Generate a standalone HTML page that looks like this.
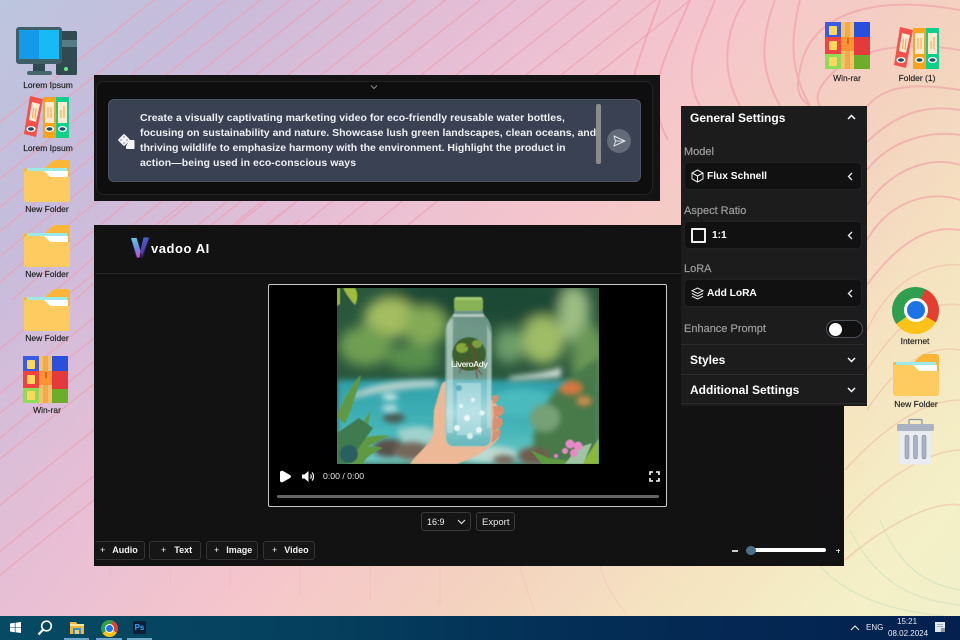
<!DOCTYPE html>
<html><head><meta charset="utf-8"><style>
*{box-sizing:border-box}
html,body{margin:0;padding:0}
body{width:960px;height:640px;overflow:hidden;position:relative;font-family:"Liberation Sans",sans-serif;background:linear-gradient(130deg,#bcc6de 0%,#c6bcdc 14%,#e6bed5 33%,#f5c5cc 49%,#f4d2bf 65%,#f5e3c0 78%,#f4efc6 90%,#f1f1cb 100%)}
.a{position:absolute}
.t{position:absolute;white-space:nowrap;line-height:1}
.l{position:absolute;white-space:nowrap;line-height:1;font-size:8.5px;color:#1c1c1c;transform:translateX(-50%);-webkit-text-stroke:.15px #1c1c1c}
svg.i{position:absolute;overflow:visible}
.btn{position:absolute;top:541px;height:19px;background:#161616;border:1px solid #333;border-radius:3px;color:#f2f2f2;font-size:9px;font-weight:bold;line-height:17px;white-space:nowrap}
.sel{position:absolute;left:684px;width:178px;height:28px;background:#111;border:1px solid #222;border-radius:5px}
.sh{position:absolute;left:690px;color:#fff;font-size:12px;font-weight:bold;line-height:1;white-space:nowrap}
.sl{position:absolute;left:684px;color:#9c9c9c;font-size:11px;line-height:1;white-space:nowrap;-webkit-text-stroke:.2px #9c9c9c}
.sv{position:absolute;color:#fff;font-size:10.2px;font-weight:bold;line-height:1;white-space:nowrap}
.p{position:absolute;left:140px;color:#eef0f4;font-size:10.5px;font-weight:bold;line-height:1;white-space:nowrap;letter-spacing:.05px}
</style></head><body>

<svg class="a" style="left:0;top:0" width="960" height="640" viewBox="0 0 960 640" fill="none">
<defs>
<path id="d" d="M-80 300C20 210 180 90 340 -40" />
</defs>
<g stroke="#ee9fb0" stroke-width="1.600" opacity=".6">
<use href="#d"/><use href="#d" x="-130" y="-5"/><use href="#d" x="-100"/><use href="#d" x="-65"/><use href="#d" x="-30"/><use href="#d" x="30"/><use href="#d" x="60"/><use href="#d" x="92"/><use href="#d" x="125"/><use href="#d" x="155"/><use href="#d" x="190"/><use href="#d" x="225"/><use href="#d" x="260"/><use href="#d" x="295"/><use href="#d" x="330"/><use href="#d" x="365"/><use href="#d" x="400"/>
<use href="#d" x="-40" y="150"/><use href="#d" x="-10" y="170"/><use href="#d" x="20" y="190"/><use href="#d" x="-60" y="230"/><use href="#d" x="-40" y="260"/><use href="#d" x="-20" y="290"/><use href="#d" x="0" y="320"/><use href="#d" x="-20" y="360"/>
</g>
<g stroke="#ee9aa5" stroke-width="2" opacity=".55">
<path d="M660 0C640 60 600 130 660 200"/><path d="M690 0C670 50 640 90 668 140"/><path d="M715 0C700 40 680 70 700 106"/><path d="M745 0C725 30 720 70 740 106"/><path d="M775 0C760 40 760 70 780 106"/><path d="M800 0C790 40 790 70 810 106"/>
<path d="M960 10C880 -5 810 10 800 70C795 90 800 100 810 106"/><path d="M960 50C900 40 850 50 826 80C816 92 816 100 820 106"/><path d="M960 90C900 80 880 92 867 106"/><path d="M867 142C900 110 930 105 960 110"/><path d="M867 170C890 140 930 130 960 135"/><path d="M867 205C890 170 930 155 960 165"/><path d="M867 240C890 200 930 190 960 200"/><path d="M867 285C900 240 930 225 960 230"/>
</g>
<g stroke="#eeb9a0" stroke-width="1.600" opacity=".5">
<path d="M867 330C890 280 930 262 960 265"/><path d="M867 370C900 320 930 300 960 305"/><path d="M867 410C900 360 930 345 960 350"/><path d="M845 470C890 420 930 400 960 400"/><path d="M845 520C880 480 930 450 960 450"/><path d="M845 560C880 530 930 500 960 505"/>
</g>
<g stroke="#cfe3c0" stroke-width="1.500" opacity=".6">
<path d="M880 520C900 570 930 585 960 590"/><path d="M850 530C880 590 920 600 960 605"/><path d="M820 566C850 600 900 612 945 616"/>
</g>
<g stroke="#f2b6b4" stroke-width="1.200" opacity=".35">
<path d="M110 566V580"/><path d="M170 566V585"/><path d="M230 566V590"/><path d="M300 566V595"/><path d="M370 566V600"/><path d="M440 566V605"/><path d="M520 566C525 585 530 600 535 612"/><path d="M600 566C605 585 615 600 625 612"/>
</g>
</svg>

<!-- icon defs -->
<svg width="0" height="0" style="position:absolute">
<defs>
<symbol id="folder" viewBox="0 0 46 42">
<path d="M22 7L30 0H43C45 0 46 1 46 3V20H22Z" fill="#fbb637"/>
<rect x="0" y="8" width="46" height="12" rx="2" fill="#fbb637"/>
<rect x="3" y="8" width="40" height="4" fill="#9ce9ea"/>
<path d="M20 11H44V17H26Z" fill="#fff"/>
<path d="M2 11H20L26 17H46V39C46 41 45 42 43 42H3C1 42 0 41 0 39V13C0 12 1 11 2 11Z" fill="#fdcb60"/>
</symbol>
<symbol id="books" viewBox="0 0 46 42">
<path d="M6 0L19 3L12 41L0 38Z" fill="#f3524c"/>
<path d="M8 6L16 8L12 26L5 24Z" fill="#fde9d2"/>
<path d="M9.500 12L8.500 22M12 12L11 23" stroke="#f7a13a" stroke-width="1"/>
<ellipse cx="7" cy="33" rx="4.500" ry="3" fill="#fff"/><ellipse cx="7" cy="33" rx="3" ry="1.800" fill="#1f4f5f"/>
<rect x="19" y="1" width="13" height="41" fill="#fca41d"/>
<rect x="21" y="6" width="9" height="21" fill="#fde9d2"/>
<path d="M24 11V22M27 11V22" stroke="#f7a13a" stroke-width="1"/>
<ellipse cx="25.500" cy="33" rx="4.500" ry="3" fill="#fff"/><ellipse cx="25.500" cy="33" rx="3" ry="1.800" fill="#1f4f5f"/>
<rect x="32" y="1" width="13" height="41" fill="#0fd08b"/>
<rect x="34" y="6" width="9" height="21" fill="#fde9d2"/>
<path d="M37 14V22M40 10V22" stroke="#f7a13a" stroke-width="1"/>
<ellipse cx="38.500" cy="33" rx="4.500" ry="3" fill="#fff"/><ellipse cx="38.500" cy="33" rx="3" ry="1.800" fill="#1f4f5f"/>
</symbol>
<symbol id="rar" viewBox="0 0 45 47">
<rect x="0" y="0" width="16" height="16" fill="#3a5ce0"/><rect x="0" y="15" width="16" height="17" fill="#f0433f"/><rect x="0" y="32" width="16" height="15" fill="#8fdc58"/>
<rect x="16" y="0" width="13" height="47" fill="#fbbf66"/><rect x="20" y="0" width="5" height="47" fill="#f0a94d"/>
<rect x="16" y="15" width="13" height="14" fill="#fd9433"/>
<rect x="22" y="16" width="2" height="6" fill="#e8631a"/>
<rect x="29" y="0" width="16" height="15" fill="#2a4fdc"/><rect x="29" y="15" width="16" height="18" fill="#e33b3b"/><rect x="29" y="33" width="16" height="14" fill="#6cae2c"/>
<rect x="4" y="4" width="8" height="9" rx="1" fill="#fbd85c"/><rect x="4" y="19" width="8" height="9" rx="1" fill="#fbd85c"/><rect x="4" y="35" width="8" height="9" rx="1" fill="#fbd85c"/>
</symbol>
</defs>
</svg>

<!-- desktop icons left -->
<svg class="i" style="left:16px;top:27px" width="61" height="48" viewBox="0 0 61 48">
<rect x="40" y="4" width="21" height="44" rx="1.500" fill="#2f4a50"/>
<rect x="40" y="13" width="21" height="7" fill="#547d86"/>
<circle cx="50" cy="42" r="2" fill="#6ee87f"/>
<rect x="0" y="0" width="46" height="37" rx="3" fill="#3f5f66"/>
<rect x="3" y="3" width="20" height="29" fill="#149ae8"/>
<rect x="23" y="3" width="20" height="29" fill="#18baf5"/>
<rect x="17" y="37" width="12" height="7" fill="#2f4a50"/>
<rect x="11" y="44" width="25" height="4" rx="2" fill="#47686f"/>
</svg>
<div class="l" style="left:48px;top:81px">Lorem Ipsum</div>
<svg class="i" style="left:24px;top:96px" width="46" height="42"><use href="#books"/></svg>
<div class="l" style="left:48px;top:144px">Lorem Ipsum</div>
<svg class="i" style="left:24px;top:160px" width="46" height="42"><use href="#folder"/></svg>
<div class="l" style="left:47px;top:205px">New Folder</div>
<svg class="i" style="left:24px;top:225px" width="46" height="42"><use href="#folder"/></svg>
<div class="l" style="left:47px;top:270px">New Folder</div>
<svg class="i" style="left:24px;top:289px" width="46" height="42"><use href="#folder"/></svg>
<div class="l" style="left:47px;top:334px">New Folder</div>
<svg class="i" style="left:23px;top:356px" width="45" height="47"><use href="#rar"/></svg>
<div class="l" style="left:47px;top:406px">Win-rar</div>

<!-- desktop icons right -->
<svg class="i" style="left:825px;top:22px" width="45" height="47"><use href="#rar"/></svg>
<div class="l" style="left:847px;top:74px">Win-rar</div>
<svg class="i" style="left:894px;top:27px" width="46" height="42"><use href="#books"/></svg>
<div class="l" style="left:917px;top:74px">Folder (1)</div>
<div class="a" style="left:892px;top:287px;width:47px;height:47px;border-radius:50%;background:conic-gradient(from 25deg,#e43e2f 0 95deg,#fbc21a 95deg 210deg,#2f9e4e 210deg 360deg)"></div>
<div class="a" style="left:904px;top:298px;width:24px;height:24px;border-radius:50%;background:#1c73e6;border:3px solid #fff"></div>
<div class="l" style="left:915px;top:337px">Internet</div>
<svg class="i" style="left:893px;top:354px" width="46" height="42"><use href="#folder"/></svg>
<div class="l" style="left:916px;top:400px">New Folder</div>
<svg class="i" style="left:897px;top:419px" width="37" height="46" viewBox="0 0 37 46">
<path d="M12 5V1.500C12 .8 12.500 .5 13 .5H24C24.500 .5 25 .8 25 1.500V5" fill="none" stroke="#8b96a5" stroke-width="1.300"/>
<rect x="3" y="11" width="31" height="34.500" rx="1.500" fill="#e9ecf1"/>
<rect x="0" y="5" width="37" height="7" rx="1.500" fill="#a9b3c1"/>
<rect x="8" y="16" width="4" height="24" rx="2" fill="#a9b3c1" stroke="#7f8ba0" stroke-width=".5"/>
<rect x="16.500" y="16" width="4" height="24" rx="2" fill="#a9b3c1" stroke="#7f8ba0" stroke-width=".5"/>
<rect x="25" y="16" width="4" height="24" rx="2" fill="#a9b3c1" stroke="#7f8ba0" stroke-width=".5"/>
</svg>

<!-- prompt panel -->
<div class="a" style="left:94px;top:75px;width:566px;height:126px;background:#141414"></div>
<div class="a" style="left:96px;top:81px;width:557px;height:114px;background:#0e0e0e;border:1px solid #242424;border-radius:8px"></div>
<svg class="i" style="left:370px;top:84px" width="8" height="6" viewBox="0 0 8 6"><path d="M1 1.500L4 4.500L7 1.500" fill="none" stroke="#8a8a8a" stroke-width="1"/></svg>
<div class="a" style="left:108px;top:99px;width:533px;height:83px;background:#3a4152;border:1px solid #4d5464;border-radius:6px"></div>
<div class="p" style="top:113px">Create a visually captivating marketing video for eco-friendly reusable water bottles,</div>
<div class="p" style="top:128px;letter-spacing:.005px">focusing on sustainability and nature. Showcase lush green landscapes, clean oceans, and</div>
<div class="p" style="top:143px;letter-spacing:-.01px">thriving wildlife to emphasize harmony with the environment. Highlight the product in</div>
<div class="p" style="top:158px">action—being used in eco-conscious ways</div>
<svg class="i" style="left:117px;top:133px" width="18" height="17" viewBox="0 0 18 17">
<rect x="2.500" y="2.500" width="9" height="9" rx="1.500" fill="#f4f4f6" transform="rotate(45 7 7)"/>
<path d="M12.500 7H16.500C17.200 7 17.500 7.500 17.500 8V15C17.500 15.800 17 16 16.500 16H10C9.300 16 9 15.500 9 15V13Z" fill="#f4f4f6"/>
<circle cx="7" cy="4" r=".6" fill="#3a4152"/><circle cx="7" cy="10" r=".6" fill="#3a4152"/><circle cx="4" cy="7" r=".6" fill="#3a4152"/><circle cx="10" cy="7" r=".6" fill="#3a4152"/>
</svg>
<div class="a" style="left:596px;top:104px;width:5px;height:60px;background:#8b8b8b;border-radius:2px"></div>
<div class="a" style="left:607px;top:129px;width:24px;height:24px;border-radius:50%;background:#636a78"></div>
<svg class="i" style="left:613px;top:135px" width="13" height="12" viewBox="0 0 13 12"><path d="M1 1L12 6L1 11L2.500 6ZM2.500 6H12" fill="none" stroke="#dfe1e6" stroke-width="1" stroke-linejoin="round"/></svg>

<!-- main panel -->
<div class="a" style="left:94px;top:225px;width:750px;height:341px;background:#121212"></div>
<div class="a" style="left:96px;top:273px;width:748px;height:1px;background:#282828"></div>
<svg class="i" style="left:130px;top:236px" width="20" height="23" viewBox="0 0 20 23">
<defs><linearGradient id="vg" x1="0" y1="0" x2="0" y2="1"><stop offset="0" stop-color="#68c4dc"/><stop offset=".5" stop-color="#6a8fe0"/><stop offset="1" stop-color="#c850c8"/></linearGradient>
<linearGradient id="vh" x1="0" y1="0" x2="0" y2="1"><stop offset="0" stop-color="#4a5fd0"/><stop offset="1" stop-color="#5a2fa0"/></linearGradient></defs>
<path d="M1 2L7 1L11 14L14 1L20 2L13 22H6Z" fill="#221d44"/>
<path d="M1 2H6.500L10.500 15L9.500 21.500H7Z" fill="url(#vg)"/>
<path d="M13.500 1.500H19L12 20.500L10.300 15Z" fill="url(#vh)"/>
</svg>
<div class="t" style="left:151px;top:242px;color:#fff;font-size:13px;font-weight:bold;letter-spacing:.55px">vadoo AI</div>

<!-- video -->
<div class="a" style="left:268px;top:284px;width:399px;height:223px;background:#000;border:1px solid #c9c9c9;border-radius:2px"></div>
<svg class="i" style="left:337px;top:288px;overflow:hidden" width="262" height="176" viewBox="0 0 262 176">
<defs>
<filter id="b6" x="-30%" y="-30%" width="160%" height="160%"><feGaussianBlur stdDeviation="6"/></filter>
<filter id="b3" x="-30%" y="-30%" width="160%" height="160%"><feGaussianBlur stdDeviation="3"/></filter>
<filter id="b1" x="-10%" y="-10%" width="120%" height="120%"><feGaussianBlur stdDeviation=".6"/></filter>
<linearGradient id="bw" x1="0" y1="0" x2="0" y2="1"><stop offset="0" stop-color="#6ebcc4"/><stop offset=".5" stop-color="#a4dadf"/><stop offset="1" stop-color="#5fb6bc"/></linearGradient>
<linearGradient id="river" x1="0" y1="0" x2="0" y2="1"><stop offset="0" stop-color="#2f9fa9"/><stop offset=".6" stop-color="#45b6b9"/><stop offset="1" stop-color="#74c8c3"/></linearGradient>
</defs>
<rect width="262" height="176" fill="#2a573c"/>
<g filter="url(#b6)">
<ellipse cx="150" cy="12" rx="110" ry="22" fill="#1f4834"/>
<ellipse cx="53" cy="30" rx="26" ry="20" fill="#a4bd60"/>
<ellipse cx="88" cy="38" rx="22" ry="20" fill="#84aa56"/>
<ellipse cx="28" cy="58" rx="26" ry="20" fill="#709f52"/>
<ellipse cx="76" cy="70" rx="26" ry="14" fill="#588f4d"/>
<ellipse cx="206" cy="52" rx="22" ry="24" fill="#9fbc66"/>
<ellipse cx="172" cy="58" rx="15" ry="17" fill="#6d9e6a"/>
<ellipse cx="237" cy="26" rx="15" ry="28" fill="#9cbd84"/>
<ellipse cx="252" cy="70" rx="18" ry="34" fill="#6a9856"/>
</g>
<path d="M0 92H262V176H0Z" fill="url(#river)" filter="url(#b3)"/>
<g filter="url(#b3)">
<path d="M12 108C40 93 70 92 100 92L100 99C60 100 30 107 12 111Z" fill="#b9d3cc"/>
<path d="M172 89C190 86 205 86 224 79L224 89C200 91 182 92 172 92Z" fill="#cfe0d8"/>
<ellipse cx="53" cy="109" rx="8" ry="3" fill="#d8f0ee"/><ellipse cx="53" cy="120" rx="8" ry="3" fill="#c9e9e8"/>
<ellipse cx="57" cy="130" rx="11" ry="5" fill="#4a5a50"/>
<path d="M60 142C85 134 95 140 105 148L70 170Z" fill="#9fd2ce"/>
<ellipse cx="185" cy="115" rx="34" ry="14" fill="#49babd"/>
<ellipse cx="150" cy="166" rx="30" ry="8" fill="#bcdad2"/>
</g>
<g filter="url(#b3)">
<ellipse cx="52" cy="160" rx="16" ry="9" fill="#5a5048"/>
<ellipse cx="75" cy="163" rx="18" ry="9" fill="#75685a"/>
<path d="M196 160C196 130 210 100 262 70V176H205Z" fill="#47794a"/>
<ellipse cx="208" cy="130" rx="15" ry="14" fill="#76a076"/>
<ellipse cx="197" cy="168" rx="16" ry="9" fill="#6e5c4e"/>
<ellipse cx="167" cy="172" rx="11" ry="5" fill="#76685a"/>
<ellipse cx="234" cy="100" rx="11" ry="6" fill="#d9783e"/>
<ellipse cx="247" cy="113" rx="7" ry="4" fill="#d0904e"/>
</g>
<g filter="url(#b1)">
<path d="M0 128C8 108 18 92 24 87C20 105 14 122 8 136ZM0 176L34 122C30 145 24 160 16 176ZM0 166C20 150 35 146 52 148C35 155 20 165 14 176ZM6 176C20 160 35 156 46 160C35 165 28 170 26 176Z" fill="#5f9a42"/>
<path d="M6 0H18C22 6 20 14 18 17C13 12 9 6 6 0Z" fill="#a0bb3c"/>
<path d="M0 0H3V16L0 18Z" fill="#a0bb3c"/>
<path d="M0 145L22 130L36 140L10 176H0Z" fill="#3f7a50"/>
<ellipse cx="12" cy="166" rx="9" ry="9" fill="#2c5e5e"/>
<path d="M193 162L212 170L232 173V176H205Z" fill="#5f9a42"/>
<path d="M262 150V176H245Z" fill="#8bb83c"/>
<path d="M228 176L240 160L255 155L246 176Z" fill="#9fc4a4"/>
</g>
<g filter="url(#b1)" fill="#e88ac8">
<circle cx="233" cy="156" r="4.500"/><circle cx="241" cy="158" r="4.500"/><circle cx="237" cy="165" r="4"/><circle cx="228" cy="163" r="3"/><circle cx="219" cy="168" r="2"/>
</g>
<g filter="url(#b1)">
<path d="M73 176C80 165 92 158 96 146L97 122L104 98C106 92 111 92 111 98L114 125L155 112L161 118L162 150C150 165 130 172 120 176Z" fill="#edb896"/>
<path d="M155 108L160 107C163 109 162 114 156 116ZM156 118L165 118C169 124 167 128 157 130ZM156 130L165 130C167 136 165 141 155 143ZM156 143L164 142C164 148 160 152 154 155Z" fill="#d98f70"/>
</g>
<g filter="url(#b1)">
<path d="M117 22H146V25L150 30C153 34 155 38 155 48V148C155 155 152 159 146 159H117C111 159 108 155 108 148V48C108 38 110 34 113 30L117 25Z" fill="#a8ccc6" opacity=".55"/>
<path d="M109 92H154V148C154 155 151 158 146 158H117C112 158 109 155 109 148Z" fill="url(#bw)" opacity=".95"/>
<path d="M110 40C110 36 113 32 116 30V145H110Z" fill="#dfefec" opacity=".45"/>
<path d="M150 36L154 46V140H150Z" fill="#e4f2ef" opacity=".35"/>
<rect x="116" y="26" width="31" height="3" fill="#dcebe6" opacity=".6"/>
<rect x="117" y="9" width="29" height="14" rx="3" fill="#87b356"/>
<rect x="118" y="9" width="27" height="3" rx="1.500" fill="#a2c870"/>
<ellipse cx="132" cy="66" rx="17" ry="17" fill="#3c5f2e"/>
<ellipse cx="125" cy="60" rx="6" ry="5" fill="#84a838"/>
<ellipse cx="140" cy="56" rx="5" ry="4" fill="#7ea03a"/>
<path d="M128 58L136 58L140 90M130 70L122 85M134 72L145 87" stroke="#6a4a30" stroke-width="1.300" fill="none"/>
<rect x="120" y="95" width="24" height="52" fill="#d4f0f2" opacity=".45"/>
<circle cx="122" cy="100" r="3" fill="#3f9fb0" opacity=".7"/><circle cx="145" cy="125" r="2.500" fill="#e8f6f6"/><circle cx="130" cy="130" r="3" fill="#eff9f9"/><circle cx="120" cy="140" r="3" fill="#e8f6f6"/><circle cx="142" cy="142" r="3" fill="#e8f6f6"/><circle cx="124" cy="118" r="2" fill="#e8f6f6"/><circle cx="136" cy="112" r="2" fill="#e8f6f6"/><circle cx="133" cy="148" r="3" fill="#d8f0f0"/>
</g>
<text x="114" y="79" fill="#e6efe2" font-family="Liberation Sans,sans-serif" font-size="8.500" font-weight="bold" textLength="37">LiveroAdy</text>
</svg>
<svg class="i" style="left:279px;top:470px" width="13" height="13" viewBox="0 0 13 13"><path d="M1 2.500C1 .8 2.500 .3 4 1L11 5C12.300 5.800 12.300 7.200 11 8L4 12C2.500 12.800 1 12.200 1 10.500Z" fill="#fff"/></svg>
<svg class="i" style="left:301px;top:470px" width="14" height="13" viewBox="0 0 14 13"><path d="M1 4.500H3.500L7.500 1V12L3.500 8.500H1Z" fill="#fff"/><path d="M9.500 4.500C10.500 5.500 10.500 7.500 9.500 8.500" stroke="#fff" stroke-width="1.200" fill="none"/><path d="M11 2.500C13 4.500 13 8.500 11 10.500" stroke="#fff" stroke-width="1.200" fill="none"/></svg>
<div class="t" style="left:323px;top:472px;color:#e8e8e8;font-size:8.700px">0:00 / 0:00</div>
<svg class="i" style="left:649px;top:471px" width="11" height="11" viewBox="0 0 11 11"><path d="M1 4V1H4M7 1H10V4M10 7V10H7M4 10H1V7" fill="none" stroke="#fff" stroke-width="1.600"/></svg>
<div class="a" style="left:277px;top:495px;width:382px;height:3px;background:#666;border-radius:2px"></div>

<!-- video toolbar -->
<div class="a" style="left:421px;top:512px;width:50px;height:19px;background:#151515;border:1px solid #3a3a3a;border-radius:3px"></div>
<div class="t" style="left:427px;top:518px;color:#eee;font-size:9px">16:9</div>
<svg class="i" style="left:457px;top:519px" width="9" height="6" viewBox="0 0 9 6"><path d="M1 1L4.500 4.500L8 1" fill="none" stroke="#ddd" stroke-width="1.200"/></svg>
<div class="a" style="left:476px;top:512px;width:39px;height:19px;background:#151515;border:1px solid #3a3a3a;border-radius:3px"></div>
<div class="t" style="left:482px;top:518px;color:#e8e8e8;font-size:9.500px">Export</div>

<div class="btn" style="left:95px;width:50px;padding-left:5px;border-left:none"><span style="font-weight:normal;margin-right:7px">+</span>Audio</div>
<div class="btn" style="left:149px;width:52px;padding-left:11px"><span style="font-weight:normal;margin-right:8px">+</span>Text</div>
<div class="btn" style="left:206px;width:52px;padding-left:7px"><span style="font-weight:normal;margin-right:7px">+</span>Image</div>
<div class="btn" style="left:263px;width:52px;padding-left:8px"><span style="font-weight:normal;margin-right:7px">+</span>Video</div>

<div class="a" style="left:732px;top:550px;width:6px;height:1.500px;background:#ccc"></div>
<div class="a" style="left:752px;top:548px;width:74px;height:4px;background:#fff;border-radius:2px"></div>
<div class="a" style="left:746px;top:545.500px;width:9.500px;height:9.500px;border-radius:50%;background:#4c6d85"></div>
<div class="a" style="left:836px;top:550px;width:4px;height:1px;background:#ccc"></div>
<div class="a" style="left:837.500px;top:548.500px;width:1px;height:4px;background:#ccc"></div>

<!-- settings -->
<div class="a" style="left:681px;top:106px;width:186px;height:300px;background:#1c1c1c"></div>
<div class="sh" style="top:111.500px">General Settings</div>
<svg class="i" style="left:847px;top:114px" width="9" height="6" viewBox="0 0 9 6"><path d="M1 5L4.500 1.500L8 5" fill="none" stroke="#fff" stroke-width="1.500"/></svg>
<div class="sl" style="top:147px">Model</div>
<div class="sel" style="top:162px"></div>
<svg class="i" style="left:691px;top:169px" width="13" height="14" viewBox="0 0 13 14"><path d="M6.500 1L12 4V10L6.500 13L1 10V4ZM1 4L6.500 7L12 4M6.500 7V13" fill="none" stroke="#eee" stroke-width="1"/></svg>
<div class="sv" style="left:707px;top:171.500px">Flux Schnell</div>
<svg class="i" style="left:847px;top:172px" width="6" height="9" viewBox="0 0 6 9"><path d="M5 1L1.500 4.500L5 8" fill="none" stroke="#eee" stroke-width="1.300"/></svg>
<div class="sl" style="top:205.500px">Aspect Ratio</div>
<div class="sel" style="top:221px"></div>
<div class="a" style="left:691px;top:228px;width:15px;height:15px;border:2px solid #f2f2f2;border-radius:1px"></div>
<div class="sv" style="left:712px;top:230.500px">1:1</div>
<svg class="i" style="left:847px;top:231px" width="6" height="9" viewBox="0 0 6 9"><path d="M5 1L1.500 4.500L5 8" fill="none" stroke="#eee" stroke-width="1.300"/></svg>
<div class="sl" style="top:264px">LoRA</div>
<div class="sel" style="top:279px"></div>
<svg class="i" style="left:691px;top:287px" width="13" height="13" viewBox="0 0 13 13"><path d="M6.500 1L12 3.700L6.500 6.400L1 3.700ZM1 6.500L6.500 9.200L12 6.500M1 9.300L6.500 12L12 9.300" fill="none" stroke="#eee" stroke-width="1"/></svg>
<div class="sv" style="left:707px;top:288.500px">Add LoRA</div>
<svg class="i" style="left:847px;top:289px" width="6" height="9" viewBox="0 0 6 9"><path d="M5 1L1.500 4.500L5 8" fill="none" stroke="#eee" stroke-width="1.300"/></svg>
<div class="sl" style="top:324px">Enhance Prompt</div>
<div class="a" style="left:826px;top:320px;width:37px;height:18px;background:#101010;border:1px solid #4a4f58;border-radius:9px"></div>
<div class="a" style="left:829px;top:322.500px;width:13px;height:13px;border-radius:50%;background:#fff"></div>
<div class="a" style="left:681px;top:344px;width:183px;height:1px;background:#2a2a2a"></div>
<div class="sh" style="top:354px">Styles</div>
<svg class="i" style="left:847px;top:357px" width="9" height="6" viewBox="0 0 9 6"><path d="M1 1L4.500 4.500L8 1" fill="none" stroke="#fff" stroke-width="1.500"/></svg>
<div class="a" style="left:681px;top:374px;width:183px;height:1px;background:#2a2a2a"></div>
<div class="sh" style="top:384px">Additional Settings</div>
<svg class="i" style="left:847px;top:387px" width="9" height="6" viewBox="0 0 9 6"><path d="M1 1L4.500 4.500L8 1" fill="none" stroke="#fff" stroke-width="1.500"/></svg>
<div class="a" style="left:681px;top:403px;width:186px;height:1px;background:#2a2a2a"></div>

<!-- taskbar -->
<div class="a" style="left:0;top:616px;width:960px;height:24px;background:linear-gradient(90deg,#064a63 0%,#05415f 30%,#042e56 60%,#03204f 100%)"></div>
<svg class="i" style="left:10px;top:622px" width="11" height="11" viewBox="0 0 11 11"><path d="M0 1.500L4.800 .8V5.200H0ZM5.500 .7L11 0V5.200H5.500ZM0 5.800H4.800V10.200L0 9.500ZM5.500 5.800H11V11L5.500 10.300Z" fill="#fff"/></svg>
<svg class="i" style="left:37px;top:620px" width="16" height="16" viewBox="0 0 16 16"><circle cx="9.500" cy="6" r="4.800" fill="none" stroke="#fff" stroke-width="1.600"/><path d="M6 9.700L1.500 14.500" stroke="#fff" stroke-width="2.200"/></svg>
<svg class="i" style="left:70px;top:621px" width="14" height="13" viewBox="0 0 14 13"><path d="M0 1H6L7.500 3H14V13H0Z" fill="#f0b93a"/><rect x="0" y="3" width="14" height="2" fill="#ffe79a"/><rect x="3" y="7" width="8" height="6" fill="#3d90d0"/><rect x="5" y="9" width="4" height="4" fill="#f6cf5c"/></svg>
<div class="a" style="left:64px;top:638px;width:25px;height:2px;background:#6ea8c8"></div>
<div class="a" style="left:101px;top:620px;width:17px;height:17px;border-radius:50%;background:conic-gradient(from 25deg,#e43e2f 0 95deg,#fbc21a 95deg 210deg,#2f9e4e 210deg 360deg)"></div>
<div class="a" style="left:105px;top:624px;width:9px;height:9px;border-radius:50%;background:#1c73e6;border:1.500px solid #fff"></div>
<div class="a" style="left:96px;top:638px;width:26px;height:2px;background:#6ea8c8"></div>
<div class="a" style="left:133px;top:621px;width:13px;height:13px;background:#0b2036;border-radius:2px;color:#31a8ff;font-size:8px;font-weight:bold;line-height:13px;text-align:center">Ps</div>
<div class="a" style="left:127px;top:638px;width:25px;height:2px;background:#6ea8c8"></div>
<svg class="i" style="left:850px;top:625px" width="10" height="6" viewBox="0 0 10 6"><path d="M1 5L5 1L9 5" fill="none" stroke="#eee" stroke-width="1"/></svg>
<div class="t" style="left:866px;top:624px;color:#e8edf2;font-size:8px">ENG</div>
<div class="t" style="left:897px;top:618px;color:#e8edf2;font-size:8px">15:21</div>
<div class="t" style="left:888px;top:630px;color:#e8edf2;font-size:8px">08.02.2024</div>
<svg class="i" style="left:935px;top:622px" width="10" height="10" viewBox="0 0 10 10"><rect width="10" height="10" fill="#dfe6ee"/><path d="M2 2.500H8M2 4.500H8" stroke="#9fb0c0" stroke-width="1"/><rect x="6" y="6" width="4" height="4" fill="#8a9cac"/></svg>
</body></html>
